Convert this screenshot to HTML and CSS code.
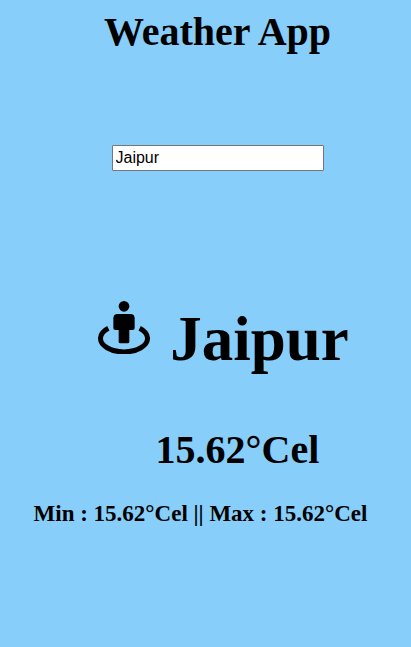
FILE: index.html
```html
<!DOCTYPE html>
<html lang="en">
<head>
<meta charset="utf-8">
<title>Weather App</title>
<link rel="stylesheet" href="styles.css">
</head>
<body>
<main class="app">
  <h1 class="title">Weather App</h1>
  <form class="search">
    <input class="search-input" type="search" aria-label="City" value="Jaipur">
  </form>
  <section class="info">
    <h2 class="location">
      <svg class="pin" viewBox="24 33 156 159" aria-hidden="true">
        <circle cx="102" cy="49" r="16"/>
        <path d="M83 72H121Q134 72 134 85V114Q134 120 128 120H118V155Q118 160 113 160H91Q86 160 86 155V120H76Q70 120 70 114V85Q70 72 83 72Z"/>
        <path d="M55 115A70.500 40.500 0 1 0 149 115" fill="none" stroke="#000" stroke-width="15"/>
      </svg>
      <span>Jaipur</span>
    </h2>
    <p class="temp">15.62°Cel</p>
    <p class="range">Min : 15.62°Cel || Max : 15.62°Cel</p>
  </section>
</main>
</body>
</html>
```
FILE: styles.css
```css
body {
  margin: 0;
  min-height: 100vh;
  background: #87cefa;
  color: #000;
  font-family: "Liberation Serif", "Times New Roman", serif;
  font-weight: bold;
}
.app {
  display: flex;
  flex-direction: column;
  align-items: center;
}
.title {
  margin: 8px 0 0 24px;
  font-size: 40px;
  line-height: 48px;
}
.search {
  margin: 89px 0 0 24px;
}
.search-input {
  appearance: none;
  box-sizing: border-box;
  display: block;
  width: 212px;
  height: 26px;
  padding: 1px 3px;
  border: 1px solid #767676;
  border-radius: 1px;
  background: #fff;
  color: #000;
  font: 16px "Liberation Sans", Arial, sans-serif;
}
.info {
  display: flex;
  flex-direction: column;
  align-items: center;
  margin-top: 128px;
}
.location {
  display: flex;
  gap: 20px;
  margin: 0 0 0 36px;
  font-size: 63px;
  line-height: 80px;
}
.pin {
  width: 52px;
  height: 53px;
  margin-top: 2px;
}
.temp {
  margin: 47px 0 0 64px;
  font-size: 40px;
  line-height: 48px;
}
.range {
  margin: 26px 10px 0 0;
  font-size: 23px;
  line-height: 28px;
}
```
